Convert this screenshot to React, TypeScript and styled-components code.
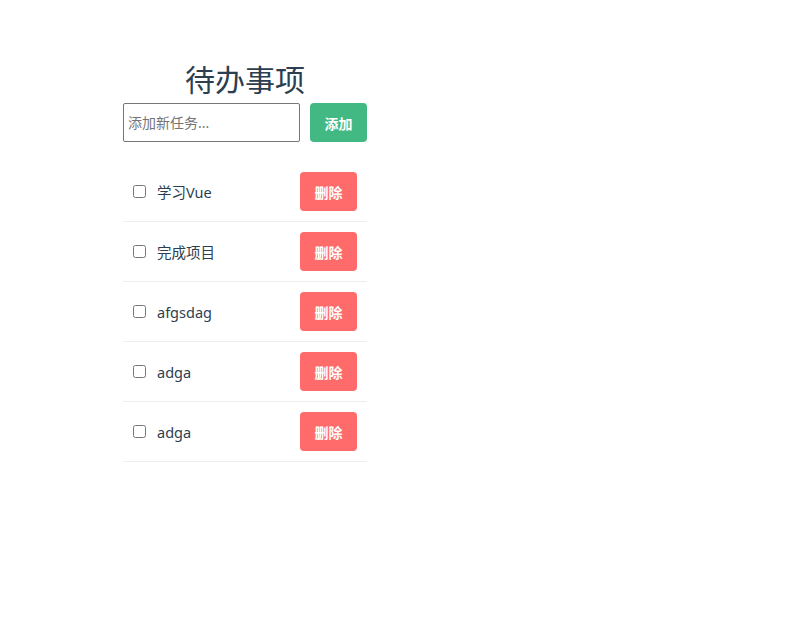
import React, { useState } from "react";
import styled, { createGlobalStyle } from "styled-components";

const GlobalStyle = createGlobalStyle`
  html, body { margin: 0; padding: 0; background: #ffffff; }
  body {
    font-family: "Noto Sans", "Noto Sans CJK SC", sans-serif;
    color: #2c3e50;
  }
`;

const Page = styled.div`
  padding: 57px 0 0 123px;
`;

const Card = styled.div`
  width: 244px;
`;

const Title = styled.h1`
  margin: 0 0 4px;
  font-size: 30px;
  font-weight: 400;
  line-height: 42px;
  text-align: center;
  color: #2c3e50;
  font-family: "Noto Sans CJK SC", sans-serif;
`;

const InputRow = styled.div`
  display: flex;
  gap: 10px;
  margin-bottom: 20px;
`;

const TaskInput = styled.input`
  flex: 1;
  min-width: 0;
  height: 39px;
  box-sizing: border-box;
  padding: 0 4px;
  border: 1px solid #767676;
  border-radius: 2px;
  font-size: 14px;
  font-family: "Noto Sans", "Noto Sans CJK SC", sans-serif;
  color: #2c3e50;
  outline: none;
  &::placeholder { color: #757575; }
`;

const Button = styled.button<{ $tone: "add" | "delete" }>`
  height: 39px;
  width: 57px;
  box-sizing: border-box;
  padding: 0;
  border: none;
  border-radius: 4px;
  background: ${(p) => (p.$tone === "add" ? "#42b983" : "#ff6b6b")};
  color: #ffffff;
  font-size: 14px;
  font-weight: 700;
  font-family: "Noto Sans CJK SC", sans-serif;
  cursor: pointer;
`;

const List = styled.ul`
  list-style: none;
  margin: 0;
  padding: 0;
`;

const Item = styled.li`
  display: flex;
  align-items: center;
  padding: 10px;
  border-bottom: 1px solid #eeeeee;
`;

const Check = styled.input`
  width: 13px;
  height: 13px;
  margin: 0;
`;

const Label = styled.span`
  flex: 1;
  margin-left: 11px;
  font-size: 14.5px;
  color: #2c3e50;
`;

export default function App() {
  const [items] = useState(["学习Vue", "完成项目", "afgsdag", "adga", "adga"]);
  return (
    <>
      <GlobalStyle />
      <Page>
        <Card>
          <Title>待办事项</Title>
          <InputRow>
            <TaskInput placeholder="添加新任务..." />
            <Button $tone="add">添加</Button>
          </InputRow>
          <List>
            {items.map((t, i) => (
              <Item key={i}>
                <Check type="checkbox" />
                <Label>{t}</Label>
                <Button $tone="delete">删除</Button>
              </Item>
            ))}
          </List>
        </Card>
      </Page>
    </>
  );
}
